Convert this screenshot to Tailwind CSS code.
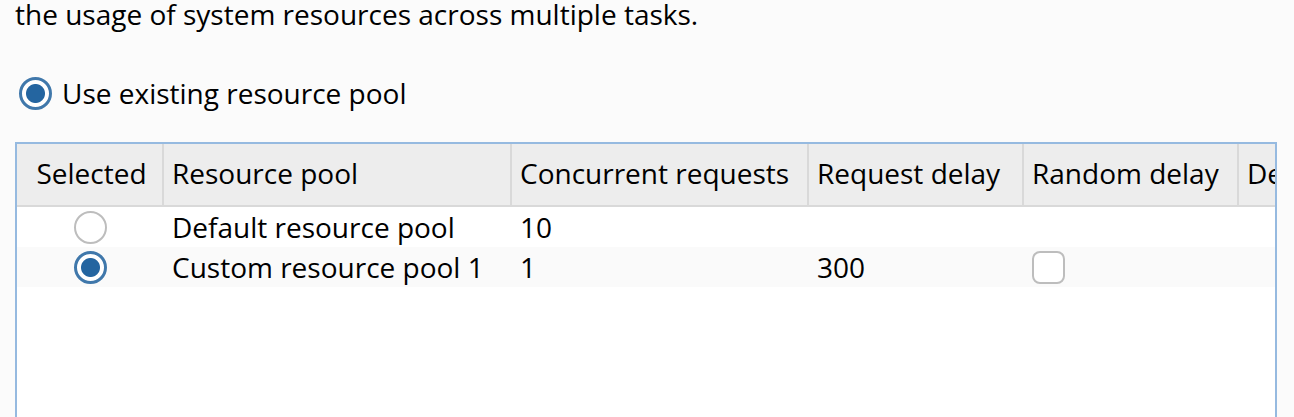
<!DOCTYPE html>
<html lang="en">
<head>
<meta charset="utf-8">
<meta name="viewport" content="width=device-width, initial-scale=1">
<title>Resource pool</title>
<script src="https://cdn.jsdelivr.net/npm/@tailwindcss/browser@4"></script>
</head>
<body class="flex h-screen flex-col overflow-hidden bg-[#fbfbfb] pr-[17px] pl-[15px] font-['Open_Sans','Noto_Sans',sans-serif] text-[28px] leading-7 text-black">
  <p class="shrink-0 whitespace-nowrap">the usage of system resources across multiple tasks.</p>
  <label class="mt-[49px] flex shrink-0 items-start gap-[10px] self-start pl-1 leading-8 whitespace-nowrap">
    <input type="radio" name="mode" checked class="size-[33px] shrink-0 appearance-none rounded-full border-3 border-[#aaa] bg-white checked:border-[#4078ab] checked:bg-[radial-gradient(circle,#2465a0_9px,#fff_10px)]">
    Use existing resource pool
  </label>
  <div class="mt-8 min-h-0 flex-1 overflow-hidden border-2 border-b-0 border-[#96bae0] bg-white">
    <table class="w-full table-fixed border-separate border-spacing-0 text-left whitespace-nowrap">
      <colgroup>
        <col class="w-[147px]"><col class="w-[348px]"><col class="w-[297px]"><col class="w-[215px]"><col class="w-[215px]"><col>
      </colgroup>
      <thead class="bg-[#ededed]">
        <tr class="h-[63px]">
          <th scope="col" class="border-r-2 border-b-2 border-[#d9d9d9] pb-1 pl-1 text-center font-normal">Selected</th>
          <th scope="col" class="border-r-2 border-b-2 border-[#d9d9d9] pb-1 pl-2 font-normal">Resource pool</th>
          <th scope="col" class="border-r-2 border-b-2 border-[#d9d9d9] pb-1 pl-2 font-normal">Concurrent requests</th>
          <th scope="col" class="border-r-2 border-b-2 border-[#d9d9d9] pb-1 pl-2 font-normal">Request delay</th>
          <th scope="col" class="border-r-2 border-b-2 border-[#d9d9d9] pb-1 pl-2 font-normal">Random delay</th>
          <th scope="col" class="overflow-hidden border-b-2 border-[#d9d9d9] pb-1 pl-2 font-normal">De</th>
        </tr>
      </thead>
      <tbody>
        <tr class="h-10">
          <td><input type="radio" name="pool" aria-label="Default resource pool" class="mx-auto block size-[33px] appearance-none rounded-full border-2 border-[#bdbdbd] bg-white checked:border-3 checked:border-[#4078ab] checked:bg-[radial-gradient(circle,#2465a0_9px,#fff_10px)]"></td>
          <td class="pl-2">Default resource pool</td>
          <td class="pl-2">10</td>
          <td></td><td></td><td></td>
        </tr>
        <tr class="h-10 bg-[#fafafa]">
          <td><input type="radio" name="pool" checked aria-label="Custom resource pool 1" class="mx-auto block size-[33px] appearance-none rounded-full border-2 border-[#bdbdbd] bg-white checked:border-3 checked:border-[#4078ab] checked:bg-[radial-gradient(circle,#2465a0_9px,#fff_10px)]"></td>
          <td class="pl-2">Custom resource pool 1</td>
          <td class="pl-2">1</td>
          <td class="pl-2">300</td>
          <td class="pl-2"><input type="checkbox" aria-label="Random delay" class="block size-[33px] appearance-none rounded-lg border-2 border-[#bdbdbd] bg-white checked:bg-[#2465a0]"></td>
          <td></td>
        </tr>
      </tbody>
    </table>
  </div>
</body>
</html>
